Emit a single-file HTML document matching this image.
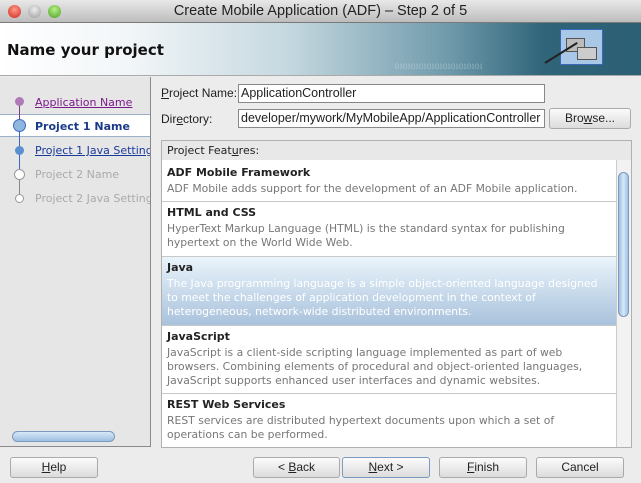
<!DOCTYPE html>
<html><head><style>
*{margin:0;padding:0;box-sizing:border-box}
body{width:641px;height:483px;overflow:hidden;background:#ececec;font-family:"DejaVu Sans","Liberation Sans",sans-serif;font-size:11px;color:#222;position:relative}
.a{position:absolute}
.title{left:0;top:0;width:641px;height:23px;background:linear-gradient(#e8e8e8,#bdbdbd);border-bottom:1px solid #7a7a7a;text-align:center;font-family:"Liberation Sans",sans-serif;font-size:14.5px;line-height:23px;color:#222}
.dot{top:5px;width:13px;height:13px;border-radius:50%}
.hdr{left:0;top:23px;width:641px;height:53px;background:linear-gradient(90deg,#ffffff 0%,#f2f6f8 20%,#c5d8e0 45%,#6f9aab 70%,#2f6479 85%,#2c5f74 100%);border-bottom:1px solid #aaa}
.left{left:0;top:77px;width:151px;height:370px;background:#e6e6e6;border-right:1px solid #8a8a8a;border-bottom:1px solid #8a8a8a}
.st{left:35px;font-size:11px}
.lb{font-family:"Liberation Sans",sans-serif;font-size:12px}
.inp{height:19px;background:#fff;border:1px solid #888;font-family:"Liberation Sans",sans-serif;font-size:12.5px;line-height:17px;padding-left:2px;white-space:nowrap;overflow:hidden}
.btn{top:457px;height:21px;border:1px solid #aaa;border-radius:3px;background:linear-gradient(#fbfbfb,#dcdcdc);text-align:center;font-family:"Liberation Sans",sans-serif;font-size:12px;line-height:19px}
.it{left:162px;width:454px;padding-left:5px;border-bottom:1px solid #c8c8c8;background:#fff}
.it b{display:block;font-size:11px;margin-top:4px;margin-bottom:3px}
.it p{font-size:10.8px;color:#777;line-height:14px}
</style></head><body>
<div class="a title">Create Mobile Application (ADF) – Step 2 of 5</div>
<div class="a dot" style="left:8px;background:radial-gradient(circle at 50% 35%,#ff9a8a,#d2261a)"></div>
<div class="a dot" style="left:28px;background:radial-gradient(circle at 50% 35%,#eee,#9a9a9a)"></div>
<div class="a dot" style="left:48px;background:radial-gradient(circle at 50% 35%,#b8f08a,#48a020)"></div>
<div class="a hdr"></div>
<div class="a" style="left:7px;top:41px;font-size:15px;font-weight:bold;color:#111">Name your project</div>
<div class="a" style="left:395px;top:62px;font-size:8px;color:rgba(255,255,255,.35);font-family:'Liberation Serif',serif">0101010101010101010101</div>
<div class="a" style="left:560px;top:29px;width:43px;height:36px;background:#a9c8e8;border:1px solid #3a68b8"></div>
<div class="a" style="left:566px;top:38px;width:19px;height:14px;background:#bbb;border:1px solid #555"></div>
<div class="a" style="left:577px;top:47px;width:20px;height:13px;background:#ccc;border:1px solid #555"></div>
<div class="a" style="left:545px;top:62px;width:38px;height:2px;background:#222;transform:rotate(-32deg);transform-origin:left"></div>
<div class="a left"></div>
<div class="a" style="left:0;top:114px;width:150px;height:23px;background:#fff;border-top:1px solid #9bb0c8;border-bottom:1px solid #9bb0c8"></div>
<div class="a" style="left:19px;top:102px;width:1px;height:24px;background:#7a3a8a"></div>
<div class="a" style="left:19px;top:126px;width:1px;height:50px;background:#3a6ac0"></div>
<div class="a" style="left:19px;top:176px;width:1px;height:22px;background:#888"></div>
<div class="a" style="left:15px;top:97px;width:9px;height:9px;border-radius:50%;background:#b07ab8"></div>
<div class="a" style="left:13px;top:119px;width:13px;height:13px;border-radius:50%;background:#8fb6e0;border:1px solid #3a6ac0"></div>
<div class="a" style="left:15px;top:146px;width:9px;height:9px;border-radius:50%;background:#5a90d0"></div>
<div class="a" style="left:14px;top:169px;width:11px;height:11px;border-radius:50%;background:#fff;border:1px solid #999"></div>
<div class="a" style="left:15px;top:194px;width:9px;height:9px;border-radius:50%;background:#fff;border:1px solid #999"></div>
<div class="a st" style="top:96px;color:#7a1a8a;text-decoration:underline">Application Name</div>
<div class="a st" style="top:120px;color:#1a3a8a;font-weight:bold">Project 1 Name</div>
<div class="a st" style="top:144px;color:#1a3a9a;text-decoration:underline;white-space:nowrap;width:115px;overflow:hidden">Project 1 Java Settings</div>
<div class="a st" style="top:168px;color:#aaa">Project 2 Name</div>
<div class="a st" style="top:192px;color:#aaa;white-space:nowrap;width:115px;overflow:hidden">Project 2 Java Settings</div>
<div class="a" style="top:431px;width:103px;height:11px;border-radius:6px;background:linear-gradient(#d8e8f8,#9fc0e0);border:1px solid #7a9ac0;left:12px"></div>
<div class="a lb" style="left:161px;top:86px"><u>P</u>roject Name:</div>
<div class="a inp" style="left:238px;top:84px;width:307px">ApplicationController</div>
<div class="a lb" style="left:161px;top:112px">Dir<u>e</u>ctory:</div>
<div class="a inp" style="left:238px;top:109px;width:307px">developer/mywork/MyMobileApp/ApplicationController</div>
<div class="a btn" style="left:549px;top:108px;width:82px;height:21px">Bro<u>w</u>se...</div>
<div class="a" style="left:161px;top:140px;width:471px;height:308px;border:1px solid #b0b0b0;background:#e8e8e8"></div>
<div class="a" style="left:167px;top:144px;font-size:11px">Project Feat<u>u</u>res:</div>
<div class="a" style="left:162px;top:160px;width:469px;height:287px;background:#fff;overflow:hidden"></div>
<div class="a it" style="top:162px;height:40px"><b>ADF Mobile Framework</b><p>ADF Mobile adds support for the development of an ADF Mobile application.</p></div>
<div class="a it" style="top:202px;height:55px"><b>HTML and CSS</b><p>HyperText Markup Language (HTML) is the standard syntax for publishing<br>hypertext on the World Wide Web.</p></div>
<div class="a it" style="top:257px;height:69px;background:linear-gradient(#eaf4fb,#a9c2dc)"><b>Java</b><p style="color:#fff">The Java programming language is a simple object-oriented language designed<br>to meet the challenges of application development in the context of<br>heterogeneous, network-wide distributed environments.</p></div>
<div class="a it" style="top:326px;height:68px"><b>JavaScript</b><p>JavaScript is a client-side scripting language implemented as part of web<br>browsers. Combining elements of procedural and object-oriented languages,<br>JavaScript supports enhanced user interfaces and dynamic websites.</p></div>
<div class="a it" style="top:394px;height:53px;border-bottom:none"><b>REST Web Services</b><p>REST services are distributed hypertext documents upon which a set of<br>operations can be performed.</p></div>
<div class="a" style="left:616px;top:160px;width:15px;height:287px;background:#f2f2f2;border-left:1px solid #ccc"></div>
<div class="a" style="left:618px;top:172px;width:11px;height:145px;border-radius:6px;background:linear-gradient(90deg,#9fc0e0,#d8e8f8,#9fc0e0);border:1px solid #7a9ac0"></div>
<div class="a btn" style="left:10px;width:88px"><u>H</u>elp</div>
<div class="a btn" style="left:253px;width:87px">&lt; <u>B</u>ack</div>
<div class="a btn" style="left:342px;width:88px;border-color:#7a9ac0"><u>N</u>ext &gt;</div>
<div class="a btn" style="left:439px;width:88px"><u>F</u>inish</div>
<div class="a btn" style="left:536px;width:88px">Cancel</div>
</body></html>
